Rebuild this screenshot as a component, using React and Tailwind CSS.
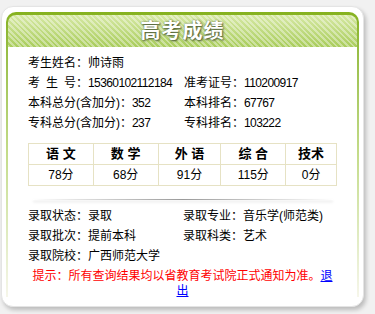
const info = [
  ["考生姓名", "帅诗雨", null, null],
  ["考 生 号", "15360102112184", "准考证号", "110200917"],
  ["本科总分(含加分)", "352", "本科排名", "67767"],
  ["专科总分(含加分)", "237", "专科排名", "103222"],
];

const scores = [
  { subject: "语 文", score: "78分", w: "w-[65px]" },
  { subject: "数 学", score: "68分", w: "w-[65px]" },
  { subject: "外 语", score: "91分", w: "w-[63px]" },
  { subject: "综 合", score: "115分", w: "w-[65px]" },
  { subject: "技术", score: "0分", w: "w-[51px]" },
];

const admission = [
  ["录取状态", "录取", "录取专业", "音乐学(师范类)"],
  ["录取批次", "提前本科", "录取科类", "艺术"],
  ["录取院校", "广西师范大学", null, null],
];

function Label({ text }) {
  if (text === "考 生 号") {
    return (
      <span className="inline-flex w-[48px] justify-between">
        <span>考</span>
        <span>生</span>
        <span>号</span>
      </span>
    );
  }
  return <span>{text}</span>;
}

function Field({ label, value }) {
  const numeric = /^\d+$/.test(value);
  return (
    <div className="flex items-center whitespace-nowrap">
      <Label text={label} />
      <span>：</span>
      <span className={numeric ? "tracking-[-0.6px]" : ""}>{value}</span>
    </div>
  );
}

export default function App() {
  return (
    <div
      className="h-[314px] w-[375px] overflow-hidden bg-[#f1f1f1] pt-[6px] text-[12px] leading-[20px] text-black"
      style={{ fontFamily: '"Liberation Sans", "Noto Sans CJK SC", sans-serif' }}
    >
      <div className="ml-[1px] h-[301px] w-[363px] rounded-[12px] border border-[#e4e4e4] bg-white px-[4px] pt-[5px] shadow-[2px_3px_4px_rgba(0,0,0,0.22)]">
        {/* green frame */}
        <div className="h-[285px] rounded-t-[10px] bg-gradient-to-b from-[#86b21e] via-[#c4dc8a] to-[#f6f6ea] px-[2px] pt-[3px]">
          <div className="flex h-[32px] items-center justify-center rounded-t-[8px] bg-[image:repeating-linear-gradient(45deg,rgba(255,255,255,0.38)_0px,rgba(255,255,255,0.38)_2px,transparent_2px,transparent_4px),linear-gradient(to_bottom,#d6e8a4,#a9cd5c)]">
            <span className="text-[20px] font-bold leading-none tracking-[1px] text-white [text-shadow:1px_1px_2px_#4a5a30,0_0_2px_#6a7a50]">
              高考成绩
            </span>
          </div>

          <div className="h-[250px] bg-white px-[20px] pt-[6px]">
            {info.map(([l1, v1, l2, v2]) => (
              <div key={l1} className="flex">
                <div className="w-[156px]">
                  <Field label={l1} value={v1} />
                </div>
                {l2 && <Field label={l2} value={v2} />}
              </div>
            ))}

            <table className="mt-[10px] border-collapse text-center">
              <tbody>
                <tr>
                  {scores.map((s) => (
                    <td
                      key={s.subject}
                      className={`${s.w} h-[20px] whitespace-pre border border-[#e6e2c4] p-0 text-[13px] font-bold`}
                    >
                      {s.subject}
                    </td>
                  ))}
                </tr>
                <tr>
                  {scores.map((s) => (
                    <td
                      key={s.subject}
                      className="h-[19px] border border-[#e6e2c4] p-0"
                    >
                      {s.score}
                    </td>
                  ))}
                </tr>
              </tbody>
            </table>

            <div className="mx-auto mt-[13px] h-px w-[300px] bg-gradient-to-r from-transparent via-[#9a9a9a] to-transparent shadow-[0_2px_3px_rgba(0,0,0,0.15)]" />

            <div className="mt-[6px]">
              {admission.map(([l1, v1, l2, v2]) => (
                <div key={l1} className="flex">
                  <div className="w-[155px]">
                    <Field label={l1} value={v1} />
                  </div>
                  {l2 && <Field label={l2} value={v2} />}
                </div>
              ))}
            </div>

            <div className="mx-auto mt-[3px] w-[302px] text-center leading-[15px] text-[#ff0000]">
              提示：所有查询结果均以省教育考试院正式通知为准。
              <a href="#" className="text-[#0000ff] underline">退</a>
              <a href="#" className="text-[#0000ff] underline">出</a>
            </div>
          </div>
        </div>
      </div>
    </div>
  );
}
